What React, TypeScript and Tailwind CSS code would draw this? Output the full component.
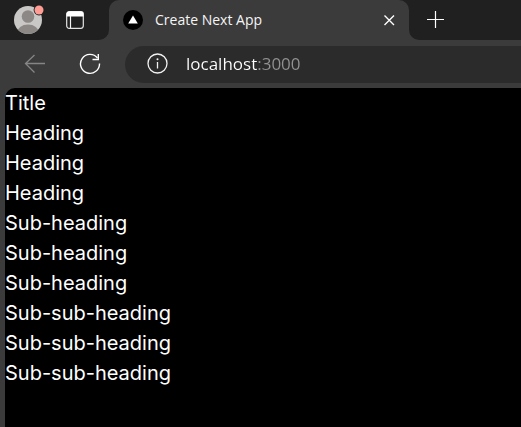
import React from "react";

const lines = [
  "Title",
  "Heading",
  "Heading",
  "Heading",
  "Sub-heading",
  "Sub-heading",
  "Sub-heading",
  "Sub-sub-heading",
  "Sub-sub-heading",
  "Sub-sub-heading",
];

function ProfileIcon() {
  return (
    <svg width="32" height="32" viewBox="0 0 32 32">
      <defs>
        <clipPath id="avatar">
          <circle cx="15" cy="12" r="14" />
        </clipPath>
      </defs>
      <g transform="translate(0 4)">
        <circle cx="15" cy="12" r="14" fill="#cac8c6" />
        <g clipPath="url(#avatar)" fill="#8b8886">
          <circle cx="15" cy="8.500" r="6.300" />
          <ellipse cx="15" cy="25" rx="11" ry="8.500" />
        </g>
      </g>
      <circle cx="26" cy="6" r="5.400" fill="#202020" />
      <circle cx="26" cy="6" r="4.500" fill="#ff9d94" />
    </svg>
  );
}

function TabActionsIcon() {
  return (
    <svg width="20" height="20" viewBox="0 0 20 20" fill="none">
      <rect x="1.700" y="1.700" width="16.600" height="16.600" rx="2.500" stroke="#e4e4e4" strokeWidth="1.200" />
      <path d="M1.500 6.500V4a2.500 2.500 0 0 1 2.500-2.500h12A2.500 2.500 0 0 1 18.500 4v2.500z" fill="#fff" />
      <path d="M5.500 6v12" stroke="#f4f4f4" strokeWidth="1.200" />
    </svg>
  );
}

function BackIcon() {
  return (
    <svg width="22" height="20" viewBox="0 0 22 20" fill="none" stroke="#858585" strokeWidth="1.300">
      <path d="M21 9.500H1.500M10.500 1 1.500 9.500l9 9" />
    </svg>
  );
}

function ReloadIcon() {
  return (
    <svg width="22" height="22" viewBox="0 0 22 22" fill="none" stroke="#fff" strokeWidth="1.400">
      <path d="M20.500 10.500A9.500 9.500 0 1 1 18.500 5" />
      <path d="M19.300 1v5.500H13.500" />
    </svg>
  );
}

function InfoIcon() {
  return (
    <svg width="22" height="22" viewBox="0 0 22 22" fill="none">
      <circle cx="11.500" cy="10.500" r="9.500" stroke="#f2f2f2" strokeWidth="1.300" />
      <path d="M11.500 9v6.500" stroke="#f2f2f2" strokeWidth="1.300" />
      <circle cx="11.500" cy="6.300" r="1" fill="#f2f2f2" />
    </svg>
  );
}

function TabStrip() {
  return (
    <div className="flex h-10">
      <div className="flex w-[109px] shrink-0 items-center rounded-br-[10px] bg-[#202020] pl-[13px]">
        <button type="button" aria-label="Profile">
          <ProfileIcon />
        </button>
        <button type="button" aria-label="Tab actions" className="ml-5">
          <TabActionsIcon />
        </button>
      </div>
      <div className="w-[300px] shrink-0 bg-[linear-gradient(#202020_50%,#3b3b3b_50%)]">
        <div className="flex h-full items-center rounded-t-[10px] bg-[#3b3b3b] pr-3 pl-3.5">
          <svg width="20" height="20" viewBox="0 0 20 20" className="shrink-0">
            <circle cx="10" cy="10" r="10" fill="#000" />
            <path d="M10 5.500 14.800 13.500H5.200z" fill="#fff" />
          </svg>
          <span className="ml-3 flex-1 truncate text-sm text-[#f5f5f5]">
            Create Next App
          </span>
          <button type="button" aria-label="Close tab" className="p-0.5">
            <svg width="12" height="12" viewBox="0 0 12 12" stroke="#fff" strokeWidth="1.400">
              <path d="M1.500 1.500l9.500 9.500M11 1.500 1.500 11" />
            </svg>
          </button>
        </div>
      </div>
      <div className="flex flex-1 items-center rounded-bl-[10px] bg-[#202020] pl-[18px]">
        <button type="button" aria-label="New tab">
          <svg width="18" height="18" viewBox="0 0 18 18" stroke="#fff" strokeWidth="1.200">
            <path d="M8.500 0v17M0 8.500h17" />
          </svg>
        </button>
      </div>
    </div>
  );
}

function Toolbar() {
  return (
    <div className="flex h-12 items-center pl-6">
      <button type="button" aria-label="Back">
        <BackIcon />
      </button>
      <button type="button" aria-label="Reload" className="ml-[33px]">
        <ReloadIcon />
      </button>
      <div className="ml-6 flex h-[37px] min-w-0 flex-1 items-center rounded-l-full bg-[#2b2b2b] pl-[21px]">
        <button type="button" aria-label="Site information">
          <InfoIcon />
        </button>
        <input
          type="text"
          aria-label="Address"
          defaultValue="localhost:3000"
          className="ml-[18px] h-6 min-w-0 flex-1 bg-[linear-gradient(to_right,#ffffff_71px,#929292_71px)] bg-clip-text text-[17px] text-transparent outline-none"
        />
      </div>
    </div>
  );
}

export default function App() {
  return (
    <div className="flex min-h-screen flex-col bg-[#3b3b3b] font-['Open_Sans','Noto_Sans',sans-serif]">
      <header>
        <TabStrip />
        <Toolbar />
      </header>
      <main className="ml-[5px] flex-1 rounded-tl-[10px] bg-black font-['Inter',sans-serif] text-xl leading-[30px] text-white">
        {lines.map((line, i) => (
          <p key={i}>{line}</p>
        ))}
      </main>
    </div>
  );
}
